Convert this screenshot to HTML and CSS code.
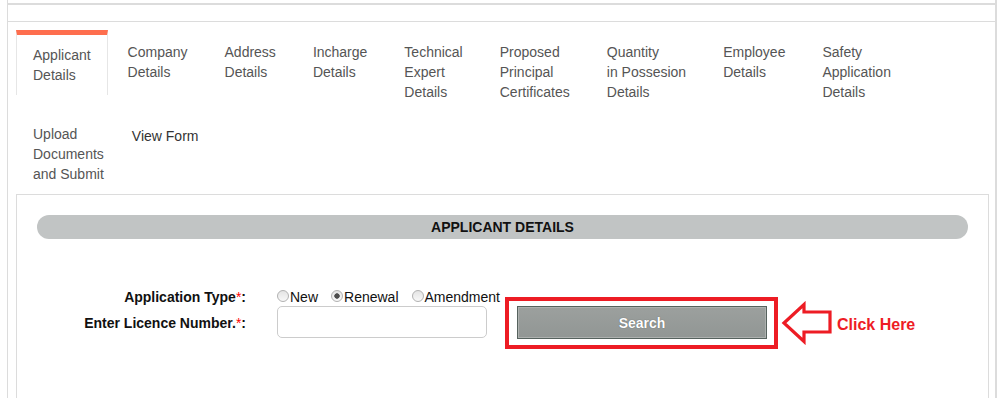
FILE: index.html
```html
<!DOCTYPE html>
<html lang="en">
<head>
<meta charset="utf-8">
<title>Applicant Details</title>
<link rel="stylesheet" href="styles.css">
</head>
<body>
<div class="frame">
  <div class="topbar"></div>
  <div class="page-body">
    <ul class="tabs">
      <li class="tab active">Applicant<br>Details</li>
      <li class="tab">Company<br>Details</li>
      <li class="tab">Address<br>Details</li>
      <li class="tab">Incharge<br>Details</li>
      <li class="tab">Technical<br>Expert<br>Details</li>
      <li class="tab">Proposed<br>Principal<br>Certificates</li>
      <li class="tab">Quantity<br>in Possesion<br>Details</li>
      <li class="tab">Employee<br>Details</li>
      <li class="tab">Safety<br>Application<br>Details</li>
      <li class="tab">Upload<br>Documents<br>and Submit</li>
      <li class="tab tab-plain">View Form</li>
    </ul>
    <section class="panel">
      <h2 class="panel-title">APPLICANT DETAILS</h2>
      <div class="form-grid">
        <div class="field-label">Application Type<span class="req">*</span>:</div>
        <div class="radios">
          <label class="opt"><input type="radio" name="apptype" class="radio">New</label>
          <label class="opt"><input type="radio" name="apptype" class="radio" checked>Renewal</label>
          <label class="opt"><input type="radio" name="apptype" class="radio">Amendment</label>
        </div>
        <div class="field-label">Enter Licence Number.<span class="req">*</span>:</div>
        <input type="text" class="text-input">
        <div class="action">
          <button type="button" class="btn-search">Search</button>
          <span class="callout-frame"></span>
          <svg class="callout-arrow" width="52" height="44" viewBox="0 0 52 44">
            <polygon points="3,22 23,3.5 23,11 49,11 49,31 23,31 23,40.5" fill="none" stroke="#ed1c24" stroke-width="3.2" stroke-linejoin="miter"/>
          </svg>
          <span class="callout-text">Click Here</span>
        </div>
      </div>
    </section>
  </div>
</div>
</body>
</html>
```

FILE: styles.css
```css
html, body {
  margin: 0;
  padding: 0;
  background: #fff;
}

body {
  font-family: "Liberation Sans", Arial, sans-serif;
  color: #111;
  overflow: hidden;
}

.frame {
  margin-left: 7px;
  width: 990px;
  box-sizing: border-box;
  border-left: 1px solid #dcdcdc;
  border-right: 2px solid #dcdcdc;
  min-height: 420px;
}

.topbar {
  height: 3px;
  border-bottom: 2px solid #dcdcdc;
  margin-bottom: 16px;
}

.page-body {
  border-top: 1px solid #dcdcdc;
  padding: 8px 6px 0 8px;
}

.tabs {
  list-style: none;
  margin: 0;
  padding: 0;
  display: flex;
  flex-wrap: wrap;
  align-items: flex-start;
}

.tab {
  margin: 0 3px 0 0;
  padding: 10px 16px;
  border: 1px solid transparent;
  border-top-width: 2px;
  border-bottom: 0;
  font-size: 14px;
  line-height: 20px;
  color: #555;
  white-space: nowrap;
}

.tab.active {
  border-color: #e6e6e6;
  border-top: 5px solid #fe6e4e;
  background: #fff;
}

.tab-plain {
  padding: 12px 16px 10px 7px;
  color: #333;
}

.panel {
  border: 1px solid #dcdcdc;
  border-bottom: 0;
  min-height: 260px;
}

.panel-title {
  margin: 20px 20px 0;
  height: 24px;
  border-radius: 12px;
  background: #c1c4c4;
  font-size: 14px;
  font-weight: bold;
  line-height: 24px;
  text-align: center;
  color: #111;
}

.form-grid {
  display: grid;
  grid-template-columns: 229px 210px 250px;
  grid-template-rows: 16px 33px;
  column-gap: 31px;
  row-gap: 1px;
  margin-top: 50px;
}

.field-label {
  font-size: 14px;
  font-weight: bold;
  line-height: 16px;
  text-align: right;
  align-self: center;
}

.req {
  color: #f00;
  font-weight: normal;
}

.radios {
  grid-column: 2 / 4;
  display: flex;
  align-items: center;
  font-size: 14px;
  line-height: 16px;
}

.opt {
  display: inline-flex;
  align-items: center;
  margin-right: 13px;
}

.radio {
  appearance: none;
  -webkit-appearance: none;
  width: 12px;
  height: 12px;
  margin: -2px 1px 0 0;
  box-sizing: border-box;
  border: 1px solid #b1b1b1;
  border-radius: 50%;
  background: linear-gradient(#e4e4e4, #f8f8f8);
}

.radio:checked {
  background: radial-gradient(circle, #4d4d4d 0 2.4px, transparent 3px), linear-gradient(#e4e4e4, #f8f8f8);
}

.text-input {
  width: 210px;
  height: 32px;
  box-sizing: border-box;
  border: 1px solid #cccccc;
  border-radius: 5px;
  margin: 0;
  padding: 0 8px;
  font: 13px "Liberation Sans", Arial, sans-serif;
}

.action {
  position: relative;
  width: 250px;
  height: 33px;
  margin-left: -1px;
}

.btn-search {
  width: 250px;
  height: 33px;
  margin: 0;
  box-sizing: border-box;
  border: 1px solid #56625e;
  background: linear-gradient(#9ca09e, #919694);
  box-shadow: inset 0 0 0 1px #adb1af;
  color: #fff;
  font: bold 14px "Liberation Sans", Arial, sans-serif;
  text-shadow: 0 0 1px #4f5653;
  padding: 0;
}

.callout-frame {
  position: absolute;
  left: -12px;
  top: -9px;
  right: -11px;
  bottom: -10px;
  border: 4px solid #ed1c24;
}

.callout-arrow {
  position: absolute;
  left: 264px;
  top: -5px;
}

.callout-text {
  position: absolute;
  left: 320px;
  top: 11px;
  font: bold 16px/16px "Liberation Sans", Arial, sans-serif;
  color: #ee1c25;
  white-space: nowrap;
}
```
